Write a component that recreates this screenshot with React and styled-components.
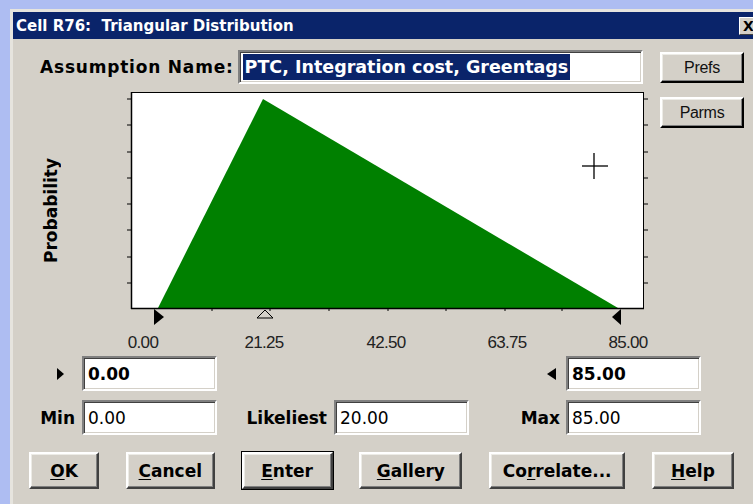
import React from "react"
import styled, { createGlobalStyle } from "styled-components"

const GlobalStyle = createGlobalStyle`
  html, body {
    margin: 0;
    padding: 0;
  }
  body {
    background: #aebdf2;
    overflow: hidden;
  }
`

const Page = styled.div`
  width: 753px;
  height: 504px;
  overflow: hidden;
  box-sizing: border-box;
  padding: 9px 0 0 10px;
  background: #aebdf2;
`

const Window = styled.div`
  width: 760px;
  height: 520px;
  background: #d4d0c8;
  border-top: 3px solid #e6e4de;
  border-left: 3px solid #e6e4de;
  font-family: "DejaVu Sans", "Liberation Sans", sans-serif;
  color: #000;
`

const TitleBar = styled.div`
  height: 27px;
  background: #0a246a;
  display: flex;
  align-items: center;
  justify-content: space-between;
  padding-left: 3px;
`

const Title = styled.div`
  color: #fff;
  font-weight: bold;
  font-size: 15px;
  white-space: pre;
`

const CloseButton = styled.div`
  width: 21px;
  height: 18px;
  margin-right: 13px;
  box-sizing: border-box;
  background: #d4d0c8;
  border: 1px solid;
  border-color: #fff #404040 #404040 #fff;
  font: bold 14px "DejaVu Sans", sans-serif;
  line-height: 16px;
  padding-left: 3px;
`

const TopSection = styled.div`
  display: flex;
`

const MainColumn = styled.div`
  width: 643px;
  display: flex;
  flex-direction: column;
`

const SideColumn = styled.div`
  display: flex;
  flex-direction: column;
  gap: 14px;
  padding: 13px 0 0 4px;
`

const NameRow = styled.div`
  display: flex;
  align-items: center;
  gap: 4px;
  margin-top: 11px;
  padding-left: 27px;
`

const Label = styled.span`
  font-weight: bold;
  font-size: 17px;
  white-space: nowrap;
  letter-spacing: ${(p) => p.$spread || 0}px;
`

const sunken = `
  box-sizing: border-box;
  background: #fff;
  border: 2px solid;
  border-color: #808080 #fff #fff #808080;
  box-shadow: inset 1px 1px #404040, inset -1px -1px #d4d0c8;
`

const NameBox = styled.div`
  ${sunken}
  width: 405px;
  height: 34px;
  display: flex;
  align-items: center;
  padding-left: 3px;
`

const Selection = styled.span`
  background: #0a246a;
  color: #fff;
  font-weight: bold;
  font-size: 17.5px;
  line-height: 26px;
  padding: 0 2px;
  white-space: nowrap;
`

const raised = `
  box-sizing: border-box;
  background: #d4d0c8;
  border: 2px solid;
  border-color: #fff #404040 #404040 #fff;
  box-shadow: inset -1px -1px #808080, inset 1px 1px #ecebe6;
`

const SmallButton = styled.div`
  ${raised}
  width: 84px;
  height: 31px;
  border-right-color: #000;
  border-bottom-color: #000;
  display: flex;
  align-items: center;
  justify-content: center;
  font: 16px "Liberation Sans", Arial, sans-serif;
  letter-spacing: -0.3px;
  color: #111;
`

const ChartRow = styled.div`
  display: flex;
  margin-top: 8px;
`

const AxisTitle = styled.div`
  width: 107px;
  height: 216px;
  box-sizing: border-box;
  padding: 22px 0 0 28px;
  display: flex;
  align-items: center;
`

const VerticalText = styled.span`
  writing-mode: vertical-rl;
  transform: rotate(180deg);
  font-weight: bold;
  font-size: 17px;
`

const FieldGrid = styled.div`
  display: grid;
  grid-template-columns: 69px 135px 117px 135px 97px 135px;
  grid-auto-rows: 35px;
  row-gap: 9px;
  margin-top: 4px;
`

const Cell = styled.div`
  display: flex;
  align-items: center;
  justify-content: flex-end;
  padding-right: ${(p) => p.$pad || 6}px;
`

const Arrow = styled.span`
  width: 0;
  height: 0;
  border-top: 6px solid transparent;
  border-bottom: 6px solid transparent;
  ${(p) =>
    p.$left
      ? "border-right: 9px solid #000;"
      : "border-left: 7px solid #000;"}
`

const ValueBox = styled.div`
  ${sunken}
  height: 35px;
  display: flex;
  align-items: center;
  padding-left: 4px;
  font-size: 17px;
  font-weight: ${(p) => (p.$bold ? "bold" : "normal")};
`

const ButtonBar = styled.div`
  display: flex;
  justify-content: space-between;
  width: 705px;
  margin: 17px 0 0 16px;
`

const DialogButton = styled.div`
  ${raised}
  width: ${(p) => p.$w}px;
  height: 37px;
  display: flex;
  align-items: center;
  justify-content: center;
  font-weight: bold;
  font-size: 17px;
  ${(p) => (p.$primary ? "outline: 1px solid #000;" : "")}
`

const Key = styled.span`
  text-decoration: underline;
  text-underline-offset: 2px;
`

const leftTicks = [7, 33, 60, 86, 112, 138, 165, 191]
const bottomTicks = [92, 150, 209, 268, 326, 385, 442]
const axisLabels = [
  [23, "0.00"],
  [144, "21.25"],
  [266, "42.50"],
  [387, "63.75"],
  [508, "85.00"],
]

function Chart() {
  return (
    <svg width="535" height="260" viewBox="0 0 535 260">
      <rect x="11.5" y="0.5" width="512" height="216" fill="#fff" stroke="#000" />
      <polygon points="38,216 143,7 498,216" fill="#008000" />
      <line x1="11.5" y1="0" x2="11.5" y2="217" stroke="#000" strokeWidth="1.5" />
      <line x1="11" y1="216.5" x2="524" y2="216.5" stroke="#000" strokeWidth="1.5" />
      {leftTicks.map((y) => (
        <g key={y}>
          <line x1="7" y1={y} x2="11" y2={y} stroke="#000" />
          <line x1="524" y1={y} x2="528" y2={y} stroke="#000" />
        </g>
      ))}
      {bottomTicks.map((x) => (
        <line key={x} x1={x} y1="217" x2={x} y2="219" stroke="#000" />
      ))}
      <polygon points="34,217 44,225 34,233" fill="#000" />
      <polygon points="145,218 153,226 137,226" fill="none" stroke="#000" />
      <polygon points="501,217 492,225 501,233" fill="#000" />
      <line x1="462" y1="74" x2="488" y2="74" stroke="#000" strokeWidth="1.3" />
      <line x1="474" y1="61" x2="474" y2="87" stroke="#000" strokeWidth="1.3" />
      {axisLabels.map(([x, t]) => (
        <text
          key={t}
          x={x}
          y="256"
          textAnchor="middle"
          fontFamily="Liberation Sans, Arial, sans-serif"
          fontSize="17"
          letterSpacing="-0.7"
          fill="#222"
        >
          {t}
        </text>
      ))}
    </svg>
  )
}

const App = () => (
  <Page>
    <GlobalStyle />
    <Window>
      <TitleBar>
        <Title>{"Cell R76:  Triangular Distribution"}</Title>
        <CloseButton>X</CloseButton>
      </TitleBar>
      <TopSection>
        <MainColumn>
          <NameRow>
            <Label $spread={0.8}>Assumption Name:</Label>
            <NameBox>
              <Selection>PTC, Integration cost, Greentags</Selection>
            </NameBox>
          </NameRow>
          <ChartRow>
            <AxisTitle>
              <VerticalText>Probability</VerticalText>
            </AxisTitle>
            <Chart />
          </ChartRow>
        </MainColumn>
        <SideColumn>
          <SmallButton>Prefs</SmallButton>
          <SmallButton>Parms</SmallButton>
        </SideColumn>
      </TopSection>
      <FieldGrid>
        <Cell $pad={18}>
          <Arrow />
        </Cell>
        <ValueBox $bold>0.00</ValueBox>
        <Cell />
        <Cell />
        <Cell $pad={10}>
          <Arrow $left />
        </Cell>
        <ValueBox $bold>85.00</ValueBox>

        <Cell $pad={7}>
          <Label>Min</Label>
        </Cell>
        <ValueBox>0.00</ValueBox>
        <Cell $pad={7}>
          <Label>Likeliest</Label>
        </Cell>
        <ValueBox>20.00</ValueBox>
        <Cell $pad={6}>
          <Label>Max</Label>
        </Cell>
        <ValueBox>85.00</ValueBox>
      </FieldGrid>
      <ButtonBar>
        <DialogButton $w={70}>
          <span>
            <Key>O</Key>K
          </span>
        </DialogButton>
        <DialogButton $w={89}>
          <span>
            <Key>C</Key>ancel
          </span>
        </DialogButton>
        <DialogButton $w={91} $primary>
          <span>
            <Key>E</Key>nter
          </span>
        </DialogButton>
        <DialogButton $w={103}>
          <span>
            <Key>G</Key>allery
          </span>
        </DialogButton>
        <DialogButton $w={136}>
          <span>
            Co<Key>r</Key>relate...
          </span>
        </DialogButton>
        <DialogButton $w={82}>
          <span>
            <Key>H</Key>elp
          </span>
        </DialogButton>
      </ButtonBar>
    </Window>
  </Page>
)

export default App
